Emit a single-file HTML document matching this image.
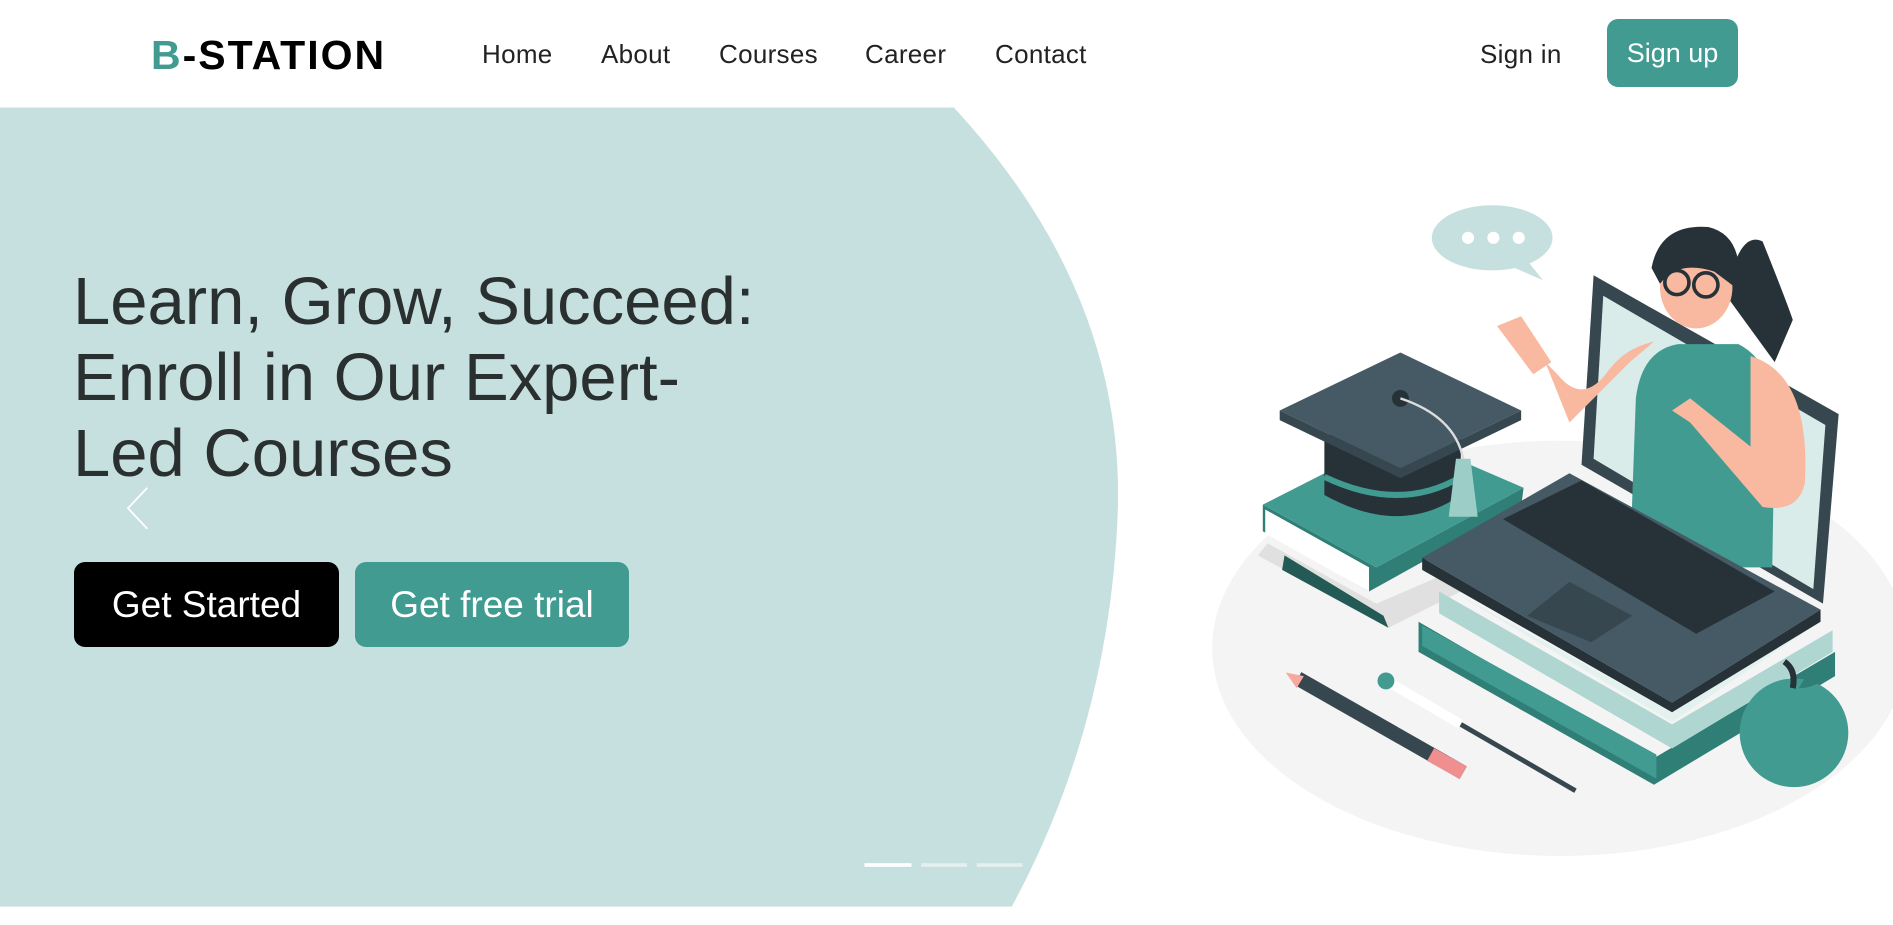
<!DOCTYPE html>
<html><head><meta charset="utf-8"><style>
*{margin:0;padding:0;box-sizing:border-box}
body{width:1893px;height:925px;overflow:hidden;background:#fff;font-family:"Liberation Sans",sans-serif;position:relative;color:#222}
svg.bg{position:absolute;left:0;top:0}
.a{position:absolute;white-space:nowrap}
.nav{font-size:26px;letter-spacing:0.3px;color:#222;top:39px}
.logo{left:151px;top:32px;font-size:41px;font-weight:bold;letter-spacing:2px;color:#000}
.logo span{color:#419b91}
.su{left:1607px;top:19px;width:131px;height:68px;background:#419b91;border-radius:11px;color:#fff;font-size:27px;text-align:center;line-height:68px}
h1{position:absolute;left:73px;top:264px;font-size:67px;font-weight:normal;line-height:76px;color:#2a2f30}
.btn{top:562px;height:85px;border-radius:11px;font-size:37px;color:#fff;text-align:center;line-height:85px}
</style></head><body>
<svg class="bg" width="1893" height="925" viewBox="0 0 1568 766.2">
<path d="M0 89 L790 89 Q930 240 926 420 Q920 600 838 751 L0 751 Z" fill="#c5e0de"/>
<rect x="716" y="715" width="39" height="3" fill="#fff"/>
<rect x="763" y="715" width="38" height="3" fill="#fff" opacity=".5"/>
<rect x="809" y="715" width="38" height="3" fill="#fff" opacity=".5"/>
<path d="M122 404 L106 421 L122 438" fill="none" stroke="#fff" stroke-width="1.5"/>
<path d="M1443 404 L1459 421 L1443 438" fill="none" stroke="#fff" stroke-width="1.5"/>
<ellipse cx="1292" cy="537" rx="288" ry="172" fill="#f4f4f4"/>
<ellipse cx="1236" cy="197" rx="50" ry="27" fill="#c5e0de"/>
<path d="M1262 212 L1278 232 L1250 220 Z" fill="#c5e0de"/>
<circle cx="1216" cy="197" r="5" fill="#fff"/><circle cx="1237" cy="197" r="5" fill="#fff"/><circle cx="1258" cy="197" r="5" fill="#fff"/>
<path d="M1042 460 L1150 520 L1210 490 L1210 470 L1140 500 L1050 450Z" fill="#e0e0e0"/>
<path d="M1064 460 L1146 510 L1150 520 L1062 472Z" fill="#245a55"/>
<path d="M1046 440 L1134 490 L1260 420 L1262 404 L1140 470 L1046 418Z" fill="#2f7f77"/>
<path d="M1046 418 L1160 360 L1262 404 L1140 470Z" fill="#419b91"/>
<path d="M1048 422 L1134 470 L1134 490 L1048 442Z" fill="#fff"/>
<path d="M1097 360 L1097 410 Q1160 445 1210 410 L1210 360Z" fill="#263238"/>
<path d="M1097 395 Q1160 425 1210 395" stroke="#419b91" stroke-width="5" fill="none"/>
<path d="M1060 340 L1160 292 L1260 340 L1160 388Z" fill="#455a64"/>
<path d="M1060 340 L1060 348 L1160 396 L1260 348 L1260 340 L1160 388Z" fill="#37474f"/>
<circle cx="1160" cy="330" r="7" fill="#263238"/>
<path d="M1160 330 Q1205 345 1212 380" stroke="#ddd" stroke-width="2" fill="none"/>
<path d="M1206 380 L1218 380 L1224 428 L1200 428Z" fill="#9dcdc7"/>
<path d="M1175 515 L1370 628 L1520 540 L1520 560 L1370 650 L1175 540Z" fill="#2f7f77"/>
<path d="M1178 518 L1372 625 L1372 645 L1178 535Z" fill="#419b91"/>
<path d="M1192 490 L1385 600 L1518 522 L1518 540 L1385 620 L1192 508Z" fill="#b0d6d2"/>
<path d="M1200 488 L1385 590 L1500 520 L1385 598Z" fill="#e3f1ef"/>
<path d="M1320 228 L1523 343 L1510 500 L1310 385Z" fill="#37474f"/>
<path d="M1328 245 L1512 352 L1502 488 L1320 380Z" fill="#d9ecea"/>
<path d="M1430 245 Q1440 190 1460 200 Q1480 250 1485 265 L1470 300 Z" fill="#263238"/>
<path d="M1355 330 Q1360 290 1390 285 L1440 285 Q1470 300 1470 350 L1468 470 L1350 470 Z" fill="#419b91"/>
<path d="M1350 300 Q1320 330 1300 350 L1280 300 L1290 310 Q1310 335 1330 310 Q1345 288 1370 283Z" fill="#f9b9a0"/>
<path d="M1240 270 L1260 262 L1285 300 L1270 310Z" fill="#f9b9a0"/>
<path d="M1450 295 Q1500 310 1495 400 Q1490 425 1460 420 L1400 350 L1385 340 L1400 330 L1450 370Z" fill="#f9b9a0"/>
<ellipse cx="1405" cy="238" rx="30" ry="34" fill="#f9b9a0"/>
<path d="M1368 222 Q1375 185 1415 188 Q1445 195 1440 240 L1420 225 Q1390 215 1375 235Z" fill="#263238"/>
<circle cx="1389" cy="234" r="10" fill="none" stroke="#263238" stroke-width="3"/>
<circle cx="1413" cy="236" r="10" fill="none" stroke="#263238" stroke-width="3"/>
<path d="M1178 462 L1300 392 L1508 505 L1385 582Z" fill="#455a64"/>
<path d="M1178 462 L1178 472 L1385 590 L1508 515 L1508 505 L1385 582Z" fill="#263238"/>
<path d="M1245 430 L1310 398 L1470 490 L1405 525Z" fill="#263238"/>
<path d="M1265 510 L1300 482 L1352 510 L1318 532Z" fill="#37474f"/>
<line x1="1075" y1="562" x2="1212" y2="640" stroke="#37474f" stroke-width="12"/>
<line x1="1185" y1="625" x2="1212" y2="640" stroke="#f08f8f" stroke-width="12"/>
<path d="M1065 557 L1080 560 L1074 570Z" fill="#f7a9a0"/>
<line x1="1145" y1="562" x2="1210" y2="600" stroke="#fff" stroke-width="8"/>
<circle cx="1148" cy="564" r="7" fill="#419b91"/>
<line x1="1210" y1="600" x2="1305" y2="655" stroke="#37474f" stroke-width="4"/>
<circle cx="1486" cy="607" r="45" fill="#419b91"/>
<path d="M1485 570 Q1488 555 1478 548" stroke="#263238" stroke-width="5" fill="none"/>
<path d="M1490 570 Q1500 550 1520 550 Q1510 570 1490 570Z" fill="#2f7f77"/>
</svg>
<div class="a logo"><span>B</span>-STATION</div>
<div class="a nav" style="left:482px">Home</div>
<div class="a nav" style="left:601px">About</div>
<div class="a nav" style="left:719px">Courses</div>
<div class="a nav" style="left:865px">Career</div>
<div class="a nav" style="left:995px">Contact</div>
<div class="a nav" style="left:1480px">Sign in</div>
<div class="a su">Sign up</div>
<h1>Learn, Grow, Succeed:<br>Enroll in Our Expert-<br>Led Courses</h1>
<div class="a btn" style="left:74px;width:265px;background:#000">Get Started</div>
<div class="a btn" style="left:355px;width:274px;background:#419b91">Get free trial</div>
</body></html>
